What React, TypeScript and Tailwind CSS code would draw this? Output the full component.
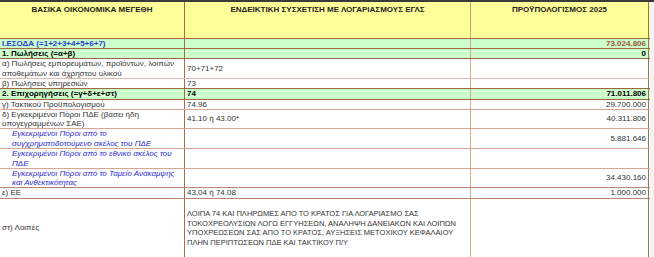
import type { ReactNode } from "react";

type RowProps = {
  h: string;
  bg?: string;
  line?: string;
  a: ReactNode;
  b?: ReactNode;
  c?: ReactNode;
  aClass?: string;
  bClass?: string;
  cClass?: string;
};

function Row({ h, bg = "bg-white", line = "border-[#d6a596]", a, b, c, aClass = "", bClass = "", cClass = "" }: RowProps) {
  return (
    <div className={`flex ${h} ${bg} border-b ${line}`}>
      <div className={`flex w-[185px] shrink-0 items-center border-r border-[#a86a4a] pl-[2px] text-left ${aClass}`}>{a}</div>
      <div className={`flex w-[286px] shrink-0 items-center border-r border-[#d9a597] pl-[2px] text-left ${bClass}`}>{b}</div>
      <div className={`flex w-[178px] shrink-0 items-center justify-end border-r border-[#a07050] pr-[2px] ${cClass}`}>{c}</div>
    </div>
  );
}

const italic = "pl-[12px] italic text-[#2a2ad0]";

const otherLines = [
  "ΛΟΙΠΑ 74 ΚΑΙ ΠΛΗΡΩΜΕΣ ΑΠΟ ΤΟ ΚΡΑΤΟΣ ΓΙΑ ΛΟΓΑΡΙΑΣΜΟ ΣΑΣ",
  "ΤΟΚΟΧΡΕΟΛΥΣΙΩΝ ΛΟΓΩ ΕΓΓΥΗΣΕΩΝ, ΑΝΑΛΗΨΗ ΔΑΝΕΙΑΚΩΝ ΚΑΙ ΛΟΙΠΩΝ",
  "ΥΠΟΧΡΕΩΣΕΩΝ ΣΑΣ ΑΠΟ ΤΟ ΚΡΑΤΟΣ, ΑΥΞΗΣΕΙΣ ΜΕΤΟΧΙΚΟΥ ΚΕΦΑΛΑΙΟΥ",
  "ΠΛΗΝ ΠΕΡΙΠΤΩΣΕΩΝ ΠΔΕ ΚΑΙ ΤΑΚΤΙΚΟΥ Π/Υ",
];

export default function App() {
  return (
    <div className="h-[257px] w-[654px] overflow-hidden bg-[#f4f4f4] text-left font-['Liberation_Sans',Arial,sans-serif] text-[8px] leading-[9.5px] text-[#333]">
      <div className="h-[2px] bg-[#3a3a3a]" />
      <div className="w-[650px] bg-white">
        <div className="flex h-[37px] border-b border-[#9c6a3c] bg-[#ffff99] font-bold text-[#222]">
          <div className="w-[185px] shrink-0 border-r border-[#a86a4a] pt-[3px] text-center">ΒΑΣΙΚΑ ΟΙΚΟΝΟΜΙΚΑ ΜΕΓΕΘΗ</div>
          <div className="w-[286px] shrink-0 border-r border-[#c9a27a] pt-[3px] text-center">ΕΝΔΕΙΚΤΙΚΗ ΣΥΣΧΕΤΙΣΗ ΜΕ ΛΟΓΑΡΙΑΣΜΟΥΣ ΕΓΛΣ</div>
          <div className="w-[178px] shrink-0 border-r border-[#a07050] pt-[3px] text-center">ΠΡΟΫΠΟΛΟΓΙΣΜΟΣ 2025</div>
        </div>
        <Row
          h="h-[10px]"
          bg="bg-[#ccffcc]"
          line="border-[#9c6a3c]"
          a="I.ΕΣΟΔΑ (=1+2+3+4+5+6+7)"
          aClass="font-bold text-[#1f3fd0]"
          c="73.024.806"
          cClass="font-bold text-[#9a5a3a]"
        />
        <Row
          h="h-[10px]"
          bg="bg-[#ccffcc]"
          line="border-[#9c6a3c]"
          a="1. Πωλήσεις (=α+β)"
          aClass="font-bold text-black"
          c="0"
          cClass="font-bold text-black"
        />
        <Row h="h-[20px]" line="border-[#e2b8ae]" a="α) Πωλήσεις εμπορευμάτων, προϊόντων, λοιπών αποθεμάτων και άχρηστου υλικού" b="70+71+72" />
        <Row h="h-[10px]" line="border-[#9c6a3c]" a="β) Πωλήσεις υπηρεσιών" b="73" />
        <Row
          h="h-[11px]"
          bg="bg-[#ccffcc]"
          line="border-[#9c6a3c]"
          a="2. Επιχορηγήσεις (=γ+δ+ε+στ)"
          aClass="font-bold text-black"
          b="74"
          bClass="font-bold text-black"
          c="71.011.806"
          cClass="font-bold text-black"
        />
        <Row h="h-[10px]" a="γ) Τακτικού Προϋπολογισμού" b="74.96" c="29.700.000" />
        <Row h="h-[19px]" a="δ) Εγκεκριμένοι Πόροι ΠΔΕ (βάσει ήδη υπογεγραμμένων ΣΑΕ)" b="41.10 ή 43.00*" c="40.311.806" />
        <Row h="h-[20px]" a="Εγκεκριμένοι Πόροι από το συγχρηματοδοτούμενο σκέλος του ΠΔΕ" aClass={italic} c="5.881.646" />
        <Row h="h-[20px]" a="Εγκεκριμένοι Πόροι από το εθνικό σκέλος του ΠΔΕ" aClass={italic} />
        <Row h="h-[19px]" line="border-[#b98470]" a="Εγκεκριμένοι Πόροι από το Ταμείο Ανάκαμψης και Ανθεκτικότητας" aClass={italic} c="34.430.160" />
        <Row h="h-[11px]" line="border-[#b98470]" a="ε) ΕΕ" b="43.04 ή 74.08" c="1.000.000" />
        <Row
          h="h-[59px]"
          line="border-transparent"
          a="στ) Λοιπές"
          b={
            <div className="w-full text-[7.5px]">
              {otherLines.map((l) => (
                <div key={l} className="w-full whitespace-nowrap text-left">
                  {l}
                </div>
              ))}
            </div>
          }
        />
      </div>
    </div>
  );
}
